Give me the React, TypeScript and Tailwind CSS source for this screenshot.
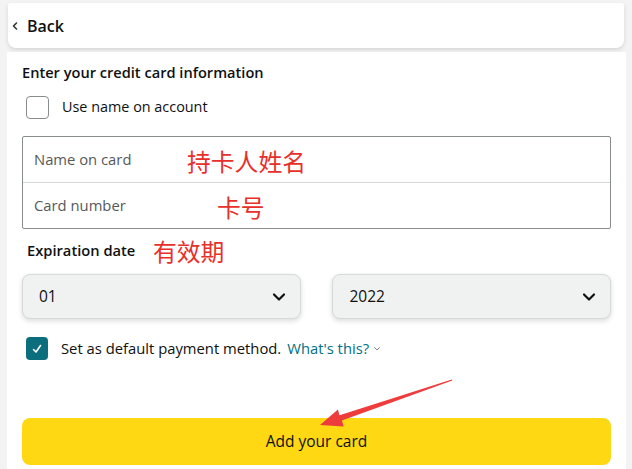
import React from "react";

function Chevron({ className }: { className?: string }) {
  return (
    <svg className={className} width="16" height="16" viewBox="0 0 16 16" fill="none">
      <path d="M3 5.5 L8 10.5 L13 5.5" stroke="#0f1111" strokeWidth="2.2" strokeLinecap="round" strokeLinejoin="round" />
    </svg>
  );
}

const cjk = { fontFamily: '"Noto Sans CJK SC", sans-serif' };

export default function App() {
  const font = { fontFamily: '"Open Sans", "Noto Sans CJK SC", sans-serif' };
  return (
    <div className="relative w-[632px] h-[469px] overflow-hidden bg-[#f3f3f3] pt-[3px] text-[#0f1111]" style={font}>
      <div className="mx-[8px] h-[45px] bg-white rounded-b-[8px] rounded-t-[2px] shadow-[0_2px_4px_rgba(0,0,0,0.12)] flex items-center pl-[3px] pt-[1px]">
        <svg width="8" height="10" viewBox="0 0 8 10" fill="none" className="mr-[8px]">
          <path d="M5.5 2 L2.5 5 L5.5 8" stroke="#333" strokeWidth="1.6" strokeLinecap="round" strokeLinejoin="round" />
        </svg>
        <span className="text-[16px] font-semibold leading-none">Back</span>
      </div>
      <div className="ml-[7px] w-[619px] mt-[4px] bg-white h-[430px] px-[15px] pt-[11px]">
        <div className="text-[14.6px] font-semibold leading-[18px]">Enter your credit card information</div>
        <div className="flex items-center mt-[15px] pl-[4px]">
          <div className="w-[23px] h-[23px] rounded-[4px] border border-[#888c8c] bg-white" />
          <span className="ml-[13px] text-[14.4px] leading-none">Use name on account</span>
        </div>
        <div className="mt-[17px] border border-[#888c8c] rounded-[2px] h-[93px] flex flex-col">
          <div className="flex items-center h-[46px] border-b border-[#d5d9d9] pl-[11px]">
            <span className="text-[14.8px] text-[#565959] w-[153px]">Name on card</span>
            <span className="text-[23.8px] text-[#e8302b] leading-none mt-[3px]" style={cjk}>持卡人姓名</span>
          </div>
          <div className="flex items-center flex-1 pl-[11px]">
            <span className="text-[14.8px] text-[#565959] w-[183px]">Card number</span>
            <span className="text-[23.8px] text-[#e8302b] leading-none mt-[3px]" style={cjk}>卡号</span>
          </div>
        </div>
        <div className="flex items-center mt-[10px] pl-[5px] h-[22px]">
          <span className="text-[14.7px] font-semibold w-[126px]">Expiration date</span>
          <span className="text-[23.8px] text-[#e8302b] leading-none mt-[2px]" style={cjk}>有效期</span>
        </div>
        <div className="flex gap-[31px] mt-[13px]">
          <div className="flex-1 h-[45px] rounded-[8px] bg-[#f0f2f2] border border-[#d5d9d9] shadow-[0_2px_5px_rgba(15,17,17,0.15)] flex items-center justify-between pl-[16px] pr-[13px]">
            <span className="text-[15.5px]">01</span>
            <Chevron />
          </div>
          <div className="flex-1 h-[45px] rounded-[8px] bg-[#f0f2f2] border border-[#d5d9d9] shadow-[0_2px_5px_rgba(15,17,17,0.15)] flex items-center justify-between pl-[17px] pr-[13px]">
            <span className="text-[15.5px]">2022</span>
            <Chevron />
          </div>
        </div>
        <div className="flex items-center mt-[18px] pl-[4px]">
          <div className="w-[22px] h-[23px] rounded-[4px] bg-[#0b6e7d] flex items-center justify-center">
            <svg width="12" height="12" viewBox="0 0 12 12" fill="none">
              <path d="M2.5 6.5 L5 9 L9.5 2.5" stroke="white" strokeWidth="1.6" strokeLinecap="round" strokeLinejoin="round" />
            </svg>
          </div>
          <span className="ml-[13px] text-[14.8px] leading-none">Set as default payment method.</span>
          <span className="ml-[6px] text-[14.8px] leading-none text-[#007185]">What's this?</span>
          <svg width="8" height="6" viewBox="0 0 8 6" fill="none" className="ml-[4px]">
            <path d="M1.5 1.5 L4 4 L6.5 1.5" stroke="#888" strokeWidth="1" strokeLinecap="round" />
          </svg>
        </div>
        <div className="mt-[58px] h-[47px] rounded-[8px] bg-[#ffd814] flex items-center justify-center">
          <span className="text-[15.5px]">Add your card</span>
        </div>
      </div>
      <svg className="absolute left-0 top-0 pointer-events-none" width="632" height="469" viewBox="0 0 632 469" fill="none">
        <path d="M320 425 L337.9 409.4 L339.5 415.3 L451.8 379.4 L452.3 380.6 L341.9 420.5 L343.7 426.4 Z" fill="#ee3b3b" />
      </svg>
    </div>
  );
}
